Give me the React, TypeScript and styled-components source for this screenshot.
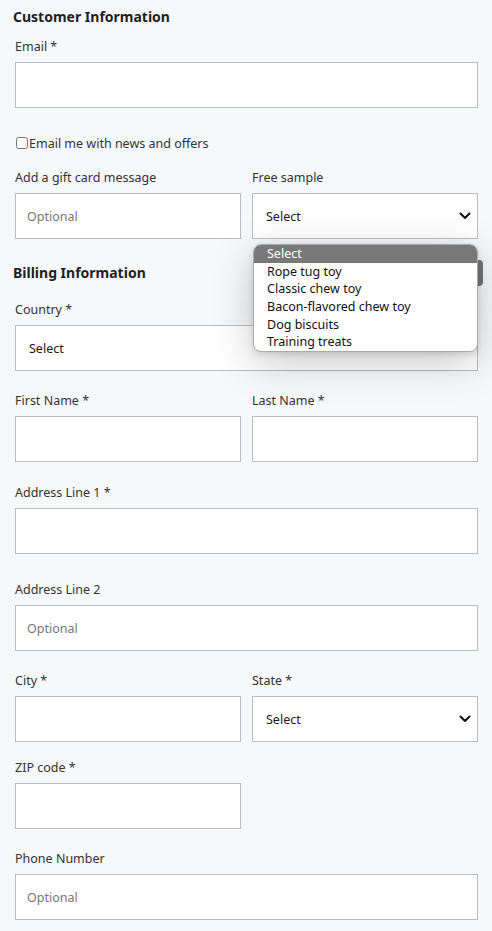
import React from "react";
import styled, { createGlobalStyle } from "styled-components";

const Global = createGlobalStyle`
  html, body { margin: 0; padding: 0; background: #f7f8fa; }
  body { font-family: "Noto Sans", "Open Sans", sans-serif; color: #2b2b2b; }
  * { box-sizing: border-box; }
`;

const Page = styled.div`
  position: relative;
  width: 492px;
  min-height: 931px;
  padding: 7px 14px 0 15px;
  background: #f7f8fa;
`;

const Heading = styled.h2<{ $top?: number }>`
  margin: ${(p) => p.$top ?? 0}px 0 0 -2px;
  font-size: 14px;
  line-height: 20px;
  font-weight: 700;
  color: #1f1f1f;
`;

const Row = styled.div<{ $top: number; $cols?: number }>`
  display: grid;
  grid-template-columns: ${(p) => (p.$cols === 2 ? "1fr 1fr" : "1fr")};
  column-gap: 11px;
  margin-top: ${(p) => p.$top}px;
`;

const Field = styled.div`
  position: relative;
  display: flex;
  flex-direction: column;
  min-width: 0;
`;

const Label = styled.label`
  font-size: 12.5px;
  line-height: 18px;
  color: #333;
  padding-top: 2px;
  margin-bottom: 6px;
`;

const Input = styled.input`
  width: 100%;
  height: 46px;
  border: 1px solid #bcbcbc;
  border-radius: 0;
  background: #fff;
  padding: 0 11px;
  font-family: inherit;
  font-size: 12.5px;
  color: #222;
  outline: none;
  &::placeholder { color: #777; }
`;

const SelectBox = styled.div`
  position: relative;
  width: 100%;
  height: 46px;
  border: 1px solid #bcbcbc;
  background: #fff;
  display: flex;
  align-items: center;
  padding: 0 13px;
  font-size: 12.5px;
  color: #1a1a1a;
`;

const Chevron = styled.svg`
  position: absolute;
  right: 6px;
  top: 50%;
  margin-top: -4px;
`;

const CheckRow = styled.label`
  display: flex;
  align-items: center;
  margin-top: 26px;
  height: 18px;
  font-size: 12.5px;
  color: #333;
  gap: 1px;
`;

const Check = styled.input`
  margin: 0 0 0 1px;
  width: 12px;
  height: 12px;
`;

const Popup = styled.ul`
  position: absolute;
  left: 253px;
  top: 244px;
  width: 225px;
  margin: 0;
  padding: 0;
  list-style: none;
  background: #fff;
  border: 1px solid #a9a9a9;
  border-radius: 8px;
  overflow: hidden;
  box-shadow: 0 10px 40px rgba(0, 0, 0, 0.22), 0 2px 6px rgba(0, 0, 0, 0.12);
  z-index: 3;
`;

const Option = styled.li<{ $active?: boolean }>`
  height: 17.7px;
  line-height: 17.7px;
  padding-left: 13px;
  font-size: 12.5px;
  color: ${(p) => (p.$active ? "#fff" : "#111")};
  background: ${(p) => (p.$active ? "#787878" : "transparent")};
`;

const Thumb = styled.div`
  position: absolute;
  left: 474px;
  top: 260px;
  width: 9px;
  height: 26px;
  background: #767676;
  border-radius: 0 4px 4px 0;
  z-index: 2;
`;

const Select = ({ value = "Select" }: { value?: string }) => (
  <SelectBox>
    {value}
    <Chevron width="12" height="8" viewBox="0 0 12 8">
      <path d="M1.5 1.5 L6 6 L10.5 1.5" fill="none" stroke="#111" strokeWidth="2" strokeLinecap="round" strokeLinejoin="round" />
    </Chevron>
  </SelectBox>
);

const TextField = ({ label, placeholder }: { label: string; placeholder?: string }) => (
  <Field>
    <Label>{label}</Label>
    <Input placeholder={placeholder} />
  </Field>
);

const SelectField = ({ label }: { label: string }) => (
  <Field>
    <Label>{label}</Label>
    <Select />
  </Field>
);

const options = ["Select", "Rope tug toy", "Classic chew toy", "Bacon-flavored chew toy", "Dog biscuits", "Training treats"];

export default function App() {
  return (
    <>
      <Global />
      <Page>
        <Heading>Customer Information</Heading>
        <Row $top={9}>
          <TextField label="Email *" />
        </Row>
        <CheckRow>
          <Check type="checkbox" />
          Email me with news and offers
        </CheckRow>
        <Row $top={15} $cols={2}>
          <TextField label="Add a gift card message" placeholder="Optional" />
          <SelectField label="Free sample" />
        </Row>
        <Heading $top={24}>Billing Information</Heading>
        <Row $top={16}>
          <SelectField label="Country *" />
        </Row>
        <Row $top={19} $cols={2}>
          <TextField label="First Name *" />
          <TextField label="Last Name *" />
        </Row>
        <Row $top={20}>
          <TextField label="Address Line 1 *" />
        </Row>
        <Row $top={25}>
          <TextField label="Address Line 2" placeholder="Optional" />
        </Row>
        <Row $top={19} $cols={2}>
          <TextField label="City *" />
          <SelectField label="State *" />
        </Row>
        <Row $top={15} $cols={2}>
          <TextField label="ZIP code *" />
        </Row>
        <Row $top={19}>
          <TextField label="Phone Number" placeholder="Optional" />
        </Row>
        <Thumb />
        <Popup>
          {options.map((o, i) => (
            <Option key={o} $active={i === 0}>
              {o}
            </Option>
          ))}
        </Popup>
      </Page>
    </>
  );
}
